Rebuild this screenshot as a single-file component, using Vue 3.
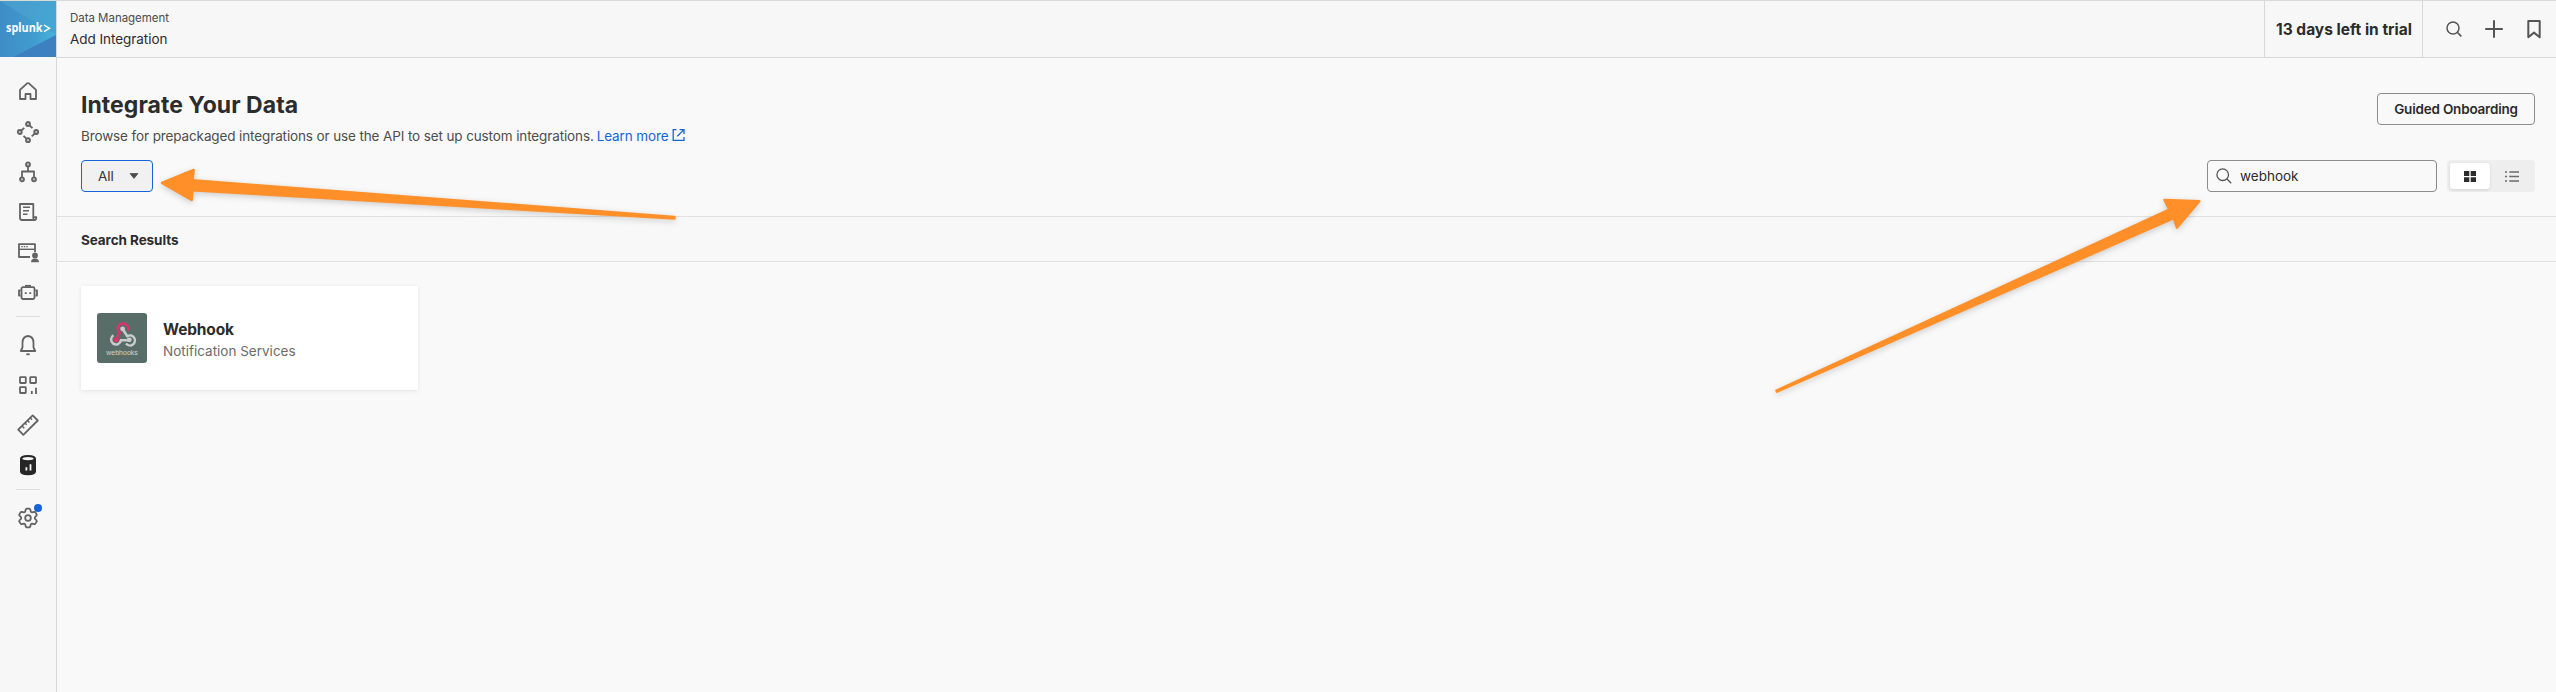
<script setup>
const gear = (() => {
  const pts = []
  for (let i = 0; i < 6; i++) {
    const base = -90 + i * 60
    for (const [da, r] of [[-24, 6.9], [-15, 8.8], [-9, 9.4], [9, 9.4], [15, 8.8], [24, 6.9]]) {
      const a = ((base + da) * Math.PI) / 180
      pts.push(`${(12 + r * Math.cos(a)).toFixed(2)} ${(12 + r * Math.sin(a)).toFixed(2)}`)
    }
  }
  return `M${pts.join('L')}Z`
})()
</script>

<template>
  <div class="app">
    <aside class="sidebar">
      <div class="logo">
        <svg width="56" height="57" viewBox="0 0 56 57">
          <defs>
            <linearGradient id="lg1" x1="0" y1="0" x2="1" y2="0.3">
              <stop offset="0" stop-color="#4a9acb" /><stop offset="1" stop-color="#45a6d3" />
            </linearGradient>
            <linearGradient id="lg2" x1="0" y1="0" x2="1" y2="0">
              <stop offset="0" stop-color="#3f8cc6" /><stop offset="0.6" stop-color="#419ccf" /><stop offset="1" stop-color="#47b4d8" />
            </linearGradient>
          </defs>
          <rect width="56" height="57" fill="url(#lg1)" />
          <path d="M0 0L56 34L11 57H0Z" fill="url(#lg2)" />
          <path d="M11 57L56 34V57Z" fill="#3d80c2" />
          <text x="6" y="31" class="logo-text" textLength="36.5" lengthAdjust="spacingAndGlyphs">splunk</text>
          <path d="M44 24L49.5 27.3L44 30.6" fill="none" stroke="#fff" stroke-width="1.4" />
        </svg>
      </div>
      <nav class="nav">
        <a class="item"><svg class="ic" viewBox="0 0 24 24"><path d="M4 19V9.8L10.8 3.6Q12 2.8 13.2 3.6L20 9.8V19H14.5V14H9.5V19Z" /></svg></a>
        <a class="item"><svg class="ic nodes" viewBox="0 0 24 24"><circle cx="12" cy="4" r="2" /><circle cx="3.8" cy="12" r="2" /><circle cx="20.2" cy="12" r="2" /><circle cx="12" cy="20.2" r="2" /><path d="M5.3 10.5L8.3 7.8M13.5 5.5L16.5 8.2M18.7 13.6L15.7 16.4M10.5 18.7L7.5 15.9" /></svg></a>
        <a class="item"><svg class="ic nodes" viewBox="0 0 24 24"><path d="M12 6.4V11.5M6 17.3V11.5H18V17.3" /><circle cx="12" cy="4.4" r="2" /><circle cx="6" cy="19.3" r="2" /><circle cx="18" cy="19.3" r="2" /></svg></a>
        <a class="item"><svg class="ic" viewBox="0 0 24 24"><path d="M6 20Q4 20 4 18V4H17.3V17.5Q17.3 20 18.6 20Q20.3 20 20.3 17.2H17.3M18.5 20H6" /><path class="thin" d="M7 7.3H14M7 10.7H13M7 14.3H11.5" /></svg></a>
        <a class="item"><svg class="ic" viewBox="0 0 24 24"><path d="M14 17H3V4.2H19V12" /><path class="thin" d="M3 9.3H19" /><path class="thin" d="M5.3 6.6H6.8M7.8 6.6H9.3M10.3 6.6H11.8" /><circle class="solid" cx="19" cy="15.4" r="2.9" /><path class="solid" d="M15 22.2Q15 18.4 19 18.4Q23 18.4 23 22.2Z" /></svg></a>
        <a class="item"><svg class="ic" viewBox="0 0 24 24"><rect x="5.5" y="7.2" width="13" height="11.8" rx="1.5" /><path d="M9 5.8H15" /><path d="M4.5 10.5H3V15.5H4.5M19.5 10.5H21V15.5H19.5" /><path class="solid" d="M8.8 12.2h1.9v1.9h-1.9zM13.3 12.2h1.9v1.9h-1.9z" /></svg></a>
        <i class="sep"></i>
        <a class="item"><svg class="ic" viewBox="0 0 24 24"><path d="M12 3Q6.5 3.4 6.5 10V14.5L4.8 18H19.2L17.5 14.5V10Q17.5 3.4 12 3Z" /><path d="M10.3 21.3H13.7" /></svg></a>
        <a class="item"><svg class="ic" viewBox="0 0 24 24"><rect x="4" y="4.2" width="5.8" height="5.8" rx=".5" /><rect x="14.2" y="4.2" width="5.8" height="5.8" rx=".5" /><rect x="4" y="14.2" width="5.8" height="5.8" rx=".5" /><path d="M15.8 18V21M20 14.7V21" /></svg></a>
        <a class="item"><svg class="ic" viewBox="0 0 24 24"><path d="M16.7 2.4L21.8 7.5L7.3 21.8L2.2 16.7Z" /><path class="thin" d="M6 13L8.3 15.3M9 10L10.7 11.7M11.5 7.5L13.5 9.5M14.3 5L16 6.7" /></svg></a>
        <a class="item"><svg class="ic" viewBox="0 0 24 24"><path d="M4 5.8Q4 2 12 2T20 5.8V18.3Q20 22.2 12 22.2T4 18.3Z" fill="#262626" stroke="none" /><ellipse cx="12" cy="5.6" rx="5.6" ry="1.6" fill="#f7f7f7" stroke="none" /><path d="M9.5 14.2h1.8v3.2H9.5zM13.6 11.2h1.8v6.2h-1.8z" fill="#f7f7f7" stroke="none" /></svg></a>
        <i class="sep"></i>
        <a class="item"><svg class="ic" viewBox="0 0 24 24"><path :d="gear" /><circle cx="12" cy="12" r="2.8" /></svg><b class="dot"></b></a>
      </nav>
    </aside>

    <div class="main">
      <header class="topbar">
        <div class="crumbs">
          <span class="crumb-parent">Data Management</span>
          <span class="crumb-page">Add Integration</span>
        </div>
        <div class="trial"><span>13 days left in trial</span></div>
        <div class="actions">
          <svg viewBox="0 0 24 24" class="act"><circle cx="11" cy="11" r="6" stroke-width="1.5" /><path d="M15.5 15.5L19.3 19.3" stroke-width="1.7" /></svg>
          <svg viewBox="0 0 24 24" class="act"><path d="M12 3.2V20.8M3.2 12H20.8" stroke-width="2" /></svg>
          <svg viewBox="0 0 24 24" class="act"><path d="M6.3 4H17.7V20.2L12 15.6L6.3 20.2Z" stroke-width="2" stroke-linejoin="round" /></svg>
        </div>
      </header>

      <section class="hero">
        <div class="hero-row">
          <div class="intro">
            <h1>Integrate Your Data</h1>
            <p>
              <span class="desc">Browse for prepackaged integrations or use the API to set up custom integrations.</span>
              <a class="learn">Learn more</a>
              <svg class="ext" viewBox="0 0 14 14"><path d="M4.5 1.6H1.2V12.4H12V9" /><path d="M7.5 1.6H12V6M12 1.6L5.3 8.3" /></svg>
            </p>
          </div>
          <button class="guided"><span>Guided Onboarding</span></button>
        </div>
        <div class="filters">
          <button class="select"><span>All</span><svg width="10" height="6" viewBox="0 0 10 6"><path d="M1 .5H9L5 5.5Z" fill="#4a4a4a" stroke="#4a4a4a" stroke-linejoin="round" stroke-width=".7" /></svg></button>
          <div class="right">
            <div class="search">
              <svg viewBox="0 0 16 16"><circle cx="6.7" cy="6.7" r="5.8" /><path d="M11 11L15.2 15.2" /></svg>
              <span>webhook</span>
            </div>
            <div class="toggle">
              <div class="on"><svg width="12" height="11" viewBox="0 0 12 11"><path d="M0 0h5.3v5H0zM6.7 0H12v5H6.7zM0 6.2h5.3V11H0zM6.7 6.2H12V11H6.7z" fill="#2c2c2c" /></svg></div>
              <div class="off"><svg width="14" height="11" viewBox="0 0 14 11"><path d="M0 1h2M4.3 1H14M0 5.5h2M4.3 5.5H14M0 10h2M4.3 10H14" stroke="#6b6b6b" stroke-width="1.5" /></svg></div>
            </div>
          </div>
        </div>
      </section>

      <div class="results-title"><h2>Search Results</h2></div>

      <div class="cards">
        <article class="card">
          <svg class="thumb" width="50" height="50" viewBox="0 0 50 50">
            <rect width="50" height="50" rx="3" fill="#586d68" />
            <g fill="none" stroke-width="2.5">
              <path d="M16.5 22.2A5 5 0 1 0 24 27.3H32" stroke="#c8cccb" />
              <path d="M25.6 16L30.3 23.2A5 5 0 1 1 29 30.5" stroke="#c8cccb" />
              <path d="M30.9 17.5A5.2 5.2 0 1 0 22.7 19.7L19.3 26.5" stroke="#e0326c" />
            </g>
            <circle cx="25.6" cy="15.8" r="2.4" fill="#c8cccb" />
            <circle cx="32.3" cy="26.8" r="2.4" fill="#c8cccb" />
            <circle cx="19.2" cy="26.8" r="2.5" fill="#e0326c" />
            <text x="9.3" y="42.3" class="thumb-text" textLength="31.5" lengthAdjust="spacingAndGlyphs">webhooks</text>
          </svg>
          <div class="card-text">
            <strong>Webhook</strong>
            <span>Notification Services</span>
          </div>
        </article>
      </div>
    </div>

    <svg class="arrows" width="2556" height="692" viewBox="0 0 2556 692">
      <path d="M162 183L193.7 170L192.3 180.3L674.5 217L674.5 218.5L192.3 190.3L191.7 200Z" />
      <path d="M2199.3 201.2L2164.5 200L2169.3 209.6L1776.5 390.7L1777 391.6L2173.8 218.2L2177 227.5Z" />
    </svg>
  </div>
</template>

<style>
html, body { margin: 0; background: #f9f9f9; }
</style>

<style scoped>
.app { position: relative; display: flex; width: 2556px; height: 692px; overflow: hidden; background: #f9f9f9; font-family: Inter, Roboto, sans-serif; color: #2c2c2c; box-sizing: border-box; border-top: 1px solid #dadada; }
.app * { box-sizing: border-box; }
.sidebar { width: 57px; flex: none; border-right: 1px solid #d8d8d8; background: #f7f7f7; }
.logo { height: 56px; overflow: hidden; }
.logo svg { display: block; }
.logo-text { font: 700 13px "Open Sans", sans-serif; fill: #fff; }
.nav { display: flex; flex-direction: column; align-items: center; padding-top: 15px; }
.item { position: relative; width: 40px; height: 40px; display: flex; align-items: center; justify-content: center; }
.ic { width: 24px; height: 24px; fill: none; stroke: #636363; stroke-width: 1.8; stroke-linejoin: round; }
.ic .thin { stroke-width: 1.4; }
.ic .solid { fill: #636363; stroke: none; }
.nodes circle { fill: #c4c4c4; }
.sep { width: 24px; height: 1px; background: #dedede; margin: 4px 0 8px; }
.dot { position: absolute; left: 26px; top: 6px; width: 8px; height: 8px; border-radius: 50%; background: #1664d9; }
.main { flex: 1; min-width: 0; }
.topbar { height: 57px; display: flex; background: #f7f7f7; border-bottom: 1px solid #d8d8d8; }
.crumbs { flex: 1; display: flex; flex-direction: column; padding: 8px 0 0 13px; }
.crumb-parent { font-size: 11.5px; line-height: 18px; color: #4d4d4d; letter-spacing: -.03px; }
.crumb-page { font-size: 13.5px; line-height: 24px; letter-spacing: -.05px; }
.trial { width: 158px; border-left: 1px solid #d8d8d8; display: flex; align-items: center; padding-left: 11px; font-size: 15.5px; font-weight: 700; white-space: nowrap; }
.actions { width: 134px; border-left: 1px solid #d8d8d8; display: flex; align-items: center; gap: 16px; padding-left: 19px; }
.act { width: 24px; height: 24px; fill: none; stroke: #555; }
.hero { height: 159px; border-bottom: 1px solid #e1e1e1; padding: 35px 21px 0 24px; }
.hero-row { display: flex; justify-content: space-between; height: 67px; }
.intro { margin-top: -3px; }
h1 { margin: 0; font-size: 23px; line-height: 30px; font-weight: 700; white-space: nowrap; letter-spacing: .04px; }
p { margin: 4px 0 0; display: flex; align-items: center; line-height: 24px; font-size: 13.5px; color: #4d4d4d; white-space: nowrap; letter-spacing: -.12px; }
.learn { color: #1664d9; margin-left: 3px; }
.ext { width: 14px; height: 14px; margin: -3px 0 0 4px; fill: none; stroke: #1664d9; stroke-width: 1.3; }
button { font: inherit; margin: 0; padding: 0; }
.guided { width: 158px; height: 32px; border: 1px solid #8c8c8c; border-radius: 4px; background: #f9f9f9; font-size: 13.5px; font-weight: 600; color: #2c2c2c; white-space: nowrap; letter-spacing: -.2px; }
.filters { display: flex; justify-content: space-between; }
.select { width: 72px; height: 32px; display: flex; align-items: center; padding: 0 13px 0 16px; justify-content: space-between; border: 1px solid #1664d9; border-radius: 4px; background: #f1f1f1; font-size: 13.5px; color: #333; }
.right { display: flex; gap: 10px; }
.search { width: 230px; height: 32px; display: flex; align-items: center; gap: 8px; padding-left: 8px; border: 1px solid #8c8c8c; border-radius: 4px; font-size: 13.5px; }
.search svg { width: 16px; height: 16px; fill: none; stroke: #555; stroke-width: 1.3; }
.toggle { width: 88px; height: 32px; display: flex; padding: 3px; border-radius: 4px; background: #eee; }
.on { flex: none; width: 40px; height: 26px; border-radius: 3px; background: #fff; box-shadow: 0 1px 3px rgba(0,0,0,.12); display: flex; align-items: center; justify-content: center; }
.off { flex: none; width: 44px; display: flex; align-items: center; justify-content: center; }
.results-title { height: 45px; border-bottom: 1px solid #e1e1e1; background: #f8f8f8; padding: 1px 24px 0; display: flex; align-items: center; }
h2 { margin: 0; font-size: 13.5px; font-weight: 700; line-height: 20px; letter-spacing: -.08px; }
.cards { padding: 24px; display: flex; }
.card { width: 337px; height: 104px; background: #fff; display: flex; align-items: center; padding-left: 16px; box-shadow: 0 1px 4px rgba(0,0,0,.09); }
.thumb-text { font: 6.5px "Liberation Sans", sans-serif; fill: #d0d4d3; }
.card-text { display: flex; flex-direction: column; margin-left: 16px; padding-top: 3px; }
.card-text strong { font-size: 15.5px; line-height: 22px; letter-spacing: -.15px; }
.card-text span { font-size: 13.5px; line-height: 20px; color: #6b6b6b; }
.arrows { position: absolute; left: 0; top: -1px; fill: #ff8f28; stroke: #ff8f28; stroke-width: 2.5; stroke-linejoin: round; filter: drop-shadow(0 2px 3px rgba(0,0,0,.18)); }
</style>
